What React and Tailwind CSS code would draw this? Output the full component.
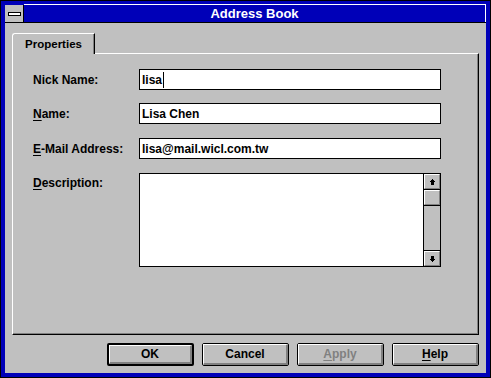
const UpArrow = () => (
  <svg width="5" height="6" viewBox="0 0 5 6" shapeRendering="crispEdges">
    <rect x="2" y="0" width="1" height="1" fill="#000" />
    <rect x="1" y="1" width="3" height="1" fill="#000" />
    <rect x="0" y="2" width="5" height="1" fill="#000" />
    <rect x="1" y="3" width="3" height="3" fill="#000" />
  </svg>
);

const DownArrow = () => (
  <svg width="5" height="6" viewBox="0 0 5 6" shapeRendering="crispEdges">
    <rect x="1" y="0" width="3" height="3" fill="#000" />
    <rect x="0" y="3" width="5" height="1" fill="#000" />
    <rect x="1" y="4" width="3" height="1" fill="#000" />
    <rect x="2" y="5" width="1" height="1" fill="#000" />
  </svg>
);

function U({ children }) {
  return <span className="underline decoration-1 underline-offset-[2px]">{children}</span>;
}

function Field({ label, value, cursor }) {
  return (
    <div className="flex h-[21px] items-center">
      <div className="w-[106px] text-[12px] font-bold text-black">{label}</div>
      <div className="flex h-[21px] w-[302px] items-center border border-black bg-white pl-[2px] text-[12px] font-bold text-black">
        {value}
        {cursor && <span className="ml-[1px] h-[16px] w-px bg-black" />}
      </div>
    </div>
  );
}

function Button({ children, isDefault, disabled }) {
  return (
    <div
      className={`h-[23px] w-[87px] rounded-[2px] border-black ${
        isDefault ? "border-2" : "border"
      }`}
    >
      <div
        className={`flex h-full items-center justify-center border-l border-t border-white border-r-2 border-b-2 border-r-[#808080] border-b-[#808080] text-[12px] font-bold ${
          disabled ? "text-[#808080]" : "text-black"
        }`}
      >
        {children}
      </div>
    </div>
  );
}

function ScrollBtn({ children, className = "" }) {
  return (
    <div className={`h-[16px] border-black bg-[#c0c0c0] ${className}`}>
      <div className="flex h-full items-center justify-center border-l border-t border-white border-r border-b border-r-[#808080] border-b-[#808080]">
        {children}
      </div>
    </div>
  );
}

export default function App() {
  return (
    <div className="h-[378px] w-[491px] border border-black bg-[#0000b8] px-[4px] pb-[4px] pt-[3px] font-['Liberation_Sans',Arial,sans-serif]">
      {/* title bar */}
      <div className="flex h-[19px] border-b border-black">
        <div className="mt-[1px] flex w-[19px] items-center justify-center border-r border-black bg-[#c0c0c0]">
          <div className="h-[4px] w-[13px] border border-black bg-white" />
        </div>
        <div className="flex-1 border-r border-t border-white bg-[#0000b8] text-center text-[13px] font-bold leading-[17px] text-white">
          Address Book
        </div>
      </div>

      {/* client */}
      <div className="h-[350px] bg-[#c0c0c0] px-[7px] pt-[10px]">
        <div className="flex">
          <div className="relative z-10 -mb-px h-[21px] w-[83px] rounded-tl-[3px] border-l border-t border-r border-white border-r-black bg-[#c0c0c0] shadow-[inset_-1px_0_0_#808080]">
            <div className="pt-[3px] text-center text-[11.5px] font-bold leading-[14px] text-black">
              Properties
            </div>
          </div>
        </div>

        <div className="h-[282px] border border-white border-b-black border-r-black shadow-[inset_-1px_-1px_0_#808080]">
          <div className="pl-[20px] pt-[15px]">
            <Field label="Nick Name:" value="lisa" cursor />
            <div className="mt-[13px]">
              <Field label={<><U>N</U>ame:</>} value="Lisa Chen" />
            </div>
            <div className="mt-[14px]">
              <Field label={<><U>E</U>-Mail Address:</>} value="lisa@mail.wicl.com.tw" />
            </div>
            <div className="mt-[14px] flex">
              <div className="w-[106px] pt-[1px] text-[12px] font-bold text-black">
                <U>D</U>escription:
              </div>
              <div className="flex h-[94px] w-[302px] border border-black bg-white">
                <div className="flex-1" />
                <div className="flex w-[17px] flex-col border-l border-black bg-[#c0c0c0]">
                  <ScrollBtn className="border-b">
                    <UpArrow />
                  </ScrollBtn>
                  <ScrollBtn className="border-b" />
                  <div className="flex-1" />
                  <ScrollBtn className="border-t">
                    <DownArrow />
                  </ScrollBtn>
                </div>
              </div>
            </div>
          </div>
        </div>

        <div className="mt-[8px] flex justify-end gap-[8px]">
          <Button isDefault>OK</Button>
          <Button>Cancel</Button>
          <Button disabled>
            <U>A</U>pply
          </Button>
          <Button>
            <U>H</U>elp
          </Button>
        </div>
      </div>
    </div>
  );
}
